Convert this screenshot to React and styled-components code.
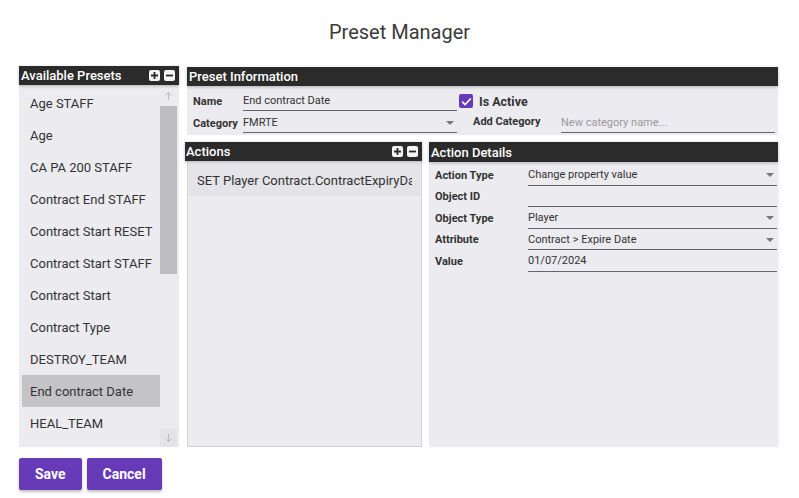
import React from "react";
import styled, { createGlobalStyle } from "styled-components";

const Global = createGlobalStyle`
  html, body { margin: 0; padding: 0; background: #fff; }
  body { font-family: Roboto, "Noto Sans", sans-serif; color: #333; }
  * { box-sizing: border-box; }
`;

const Page = styled.div`
  width: 799px;
  height: 498px;
  padding: 0 21px 0 19px;
  display: flex;
  flex-direction: column;
`;

const Title = styled.h1`
  margin: 0;
  height: 66px;
  display: flex;
  align-items: center;
  justify-content: center;
  font-size: 20px;
  font-weight: 400;
  color: #3a3a3a;
  padding: 0 0 2px 2px;
`;

const Main = styled.div`
  display: grid;
  grid-template-columns: 160px 1fr;
  column-gap: 8px;
  height: 381px;
`;

const Column = styled.div`
  display: flex;
  flex-direction: column;
  min-height: 0;
`;

const Header = styled.div`
  height: ${(p) => p.$h || 19}px;
  flex: none;
  background: #2b2b2b;
  color: #fff;
  font-size: 13px;
  font-weight: 500;
  display: flex;
  align-items: center;
  padding: 0 4px 0 ${(p) => p.$pl ?? 2}px;
  margin-left: ${(p) => p.$ml || 0}px;
  box-shadow: 0 1px 3px rgba(0, 0, 0, 0.25);
  position: relative;
  z-index: 1;
`;

const HeaderTitle = styled.span`
  flex: 1;
`;

const IconBtns = styled.div`
  display: flex;
  gap: 4px;
`;

const IconBtn = styled.div`
  width: 11px;
  height: 11px;
  border-radius: 2px;
  background: #f4f4f4;
  display: flex;
  align-items: center;
  justify-content: center;
`;

const ListBody = styled.div`
  flex: 1;
  background: #ecebf0;
  display: flex;
  padding: 2px 2px 0 3px;
  min-height: 0;
`;

const Items = styled.div`
  flex: 1;
  display: flex;
  flex-direction: column;
`;

const Item = styled.div`
  height: 32px;
  flex: none;
  display: flex;
  align-items: center;
  padding-left: 8px;
  font-size: 13px;
  color: #333;
  background: ${(p) => (p.$selected ? "#c4c3c8" : "transparent")};
`;

const ScrollBar = styled.div`
  width: 17px;
  display: flex;
  flex-direction: column;
  margin-top: -2px;
`;

const ScrollArrow = styled.div`
  height: ${(p) => p.$h || 18}px;
  display: flex;
  align-items: center;
  justify-content: center;
  background: ${(p) => (p.$bg ? "#e4e3e8" : "transparent")};
`;

const ScrollThumb = styled.div`
  height: 168px;
  background: #bdbcc1;
`;

const ScrollSpace = styled.div`
  flex: 1;
`;

const RightCol = styled.div`
  display: flex;
  flex-direction: column;
  gap: 7px;
  min-height: 0;
`;

const InfoSection = styled.div`
  display: flex;
  flex-direction: column;
  margin-top: 1px;
`;

const InfoBody = styled.div`
  background: #ecebf0;
  height: 49px;
  padding: 5px 2px 0 6px;
  display: grid;
  grid-template-columns: 50px 214px 16px 88px 214px;
  grid-template-rows: 20px 20px;
  row-gap: 2px;
  align-items: end;
`;

const Label = styled.div`
  font-size: 11px;
  font-weight: 700;
  color: #333;
  align-self: center;
  white-space: nowrap;
  margin-top: ${(p) => p.$mt || 0}px;
`;

const Field = styled.div`
  height: 20px;
  border-bottom: 1px solid #666;
  display: flex;
  align-items: center;
  padding: 0 3px 1px 0;
  font-size: 11px;
  color: ${(p) => (p.$placeholder ? "#9a9a9e" : "#333")};
  white-space: nowrap;
  overflow: hidden;
`;

const FieldText = styled.span`
  flex: 1;
  overflow: hidden;
`;

const Caret = styled.span`
  width: 0;
  height: 0;
  border-left: 4px solid transparent;
  border-right: 4px solid transparent;
  border-top: 4px solid #777;
  margin-top: 1px;
`;

const CheckGroup = styled.div`
  grid-column: 3 / span 2;
  display: flex;
  align-items: center;
  gap: 6px;
  margin-left: 2px;
  align-self: center;
  font-size: 12.5px;
  font-weight: 700;
  color: #333;
`;

const Check = styled.div`
  width: 14px;
  height: 14px;
  border-radius: 2px;
  background: #673ab7;
  display: flex;
  align-items: center;
  justify-content: center;
`;

const Lower = styled.div`
  flex: 1;
  display: grid;
  grid-template-columns: 235px 1fr;
  column-gap: 7px;
  min-height: 0;
`;

const ActionsBody = styled.div`
  flex: 1;
  background: #ecebf0;
  border: 1px solid #d2d1d6;
  border-top: none;
  padding: 3px 1px 0 1px;
`;

const ActionRow = styled.div`
  height: 32px;
  display: flex;
  align-items: center;
  padding: 0 8px 0 8px;
  font-size: 13px;
  color: #333;
  background: #e4e3e8;
  white-space: nowrap;
`;

const ActionText = styled.span`
  overflow: hidden;
  flex: 1;
`;

const DetailsBody = styled.div`
  flex: 1;
  background: #ecebf0;
  padding: 3px 1px 0 6px;
  display: flex;
  flex-direction: column;
  gap: 1px;
  box-shadow: 1px 0 2px rgba(0, 0, 0, 0.06);
`;

const DetailRow = styled.div`
  display: grid;
  grid-template-columns: 93px 1fr;
  height: 20.5px;
  align-items: end;
`;

const Footer = styled.div`
  display: flex;
  gap: 5px;
  margin-top: 11px;
`;

const Button = styled.button`
  height: 32px;
  padding: 0 ${(p) => p.$px || 16}px;
  border: none;
  border-radius: 2px;
  background: #673ab7;
  color: #fff;
  font-family: Roboto, sans-serif;
  font-size: 14px;
  font-weight: 700;
  box-shadow: 0 2px 3px rgba(0, 0, 0, 0.25);
  cursor: pointer;
`;

const Plus = () => (
  <svg width="9" height="9" viewBox="0 0 9 9">
    <path d="M4.5 1v7M1 4.5h7" stroke="#2b2b2b" strokeWidth="1.8" />
  </svg>
);
const Minus = () => (
  <svg width="9" height="9" viewBox="0 0 9 9">
    <path d="M1 4.5h7" stroke="#2b2b2b" strokeWidth="1.8" />
  </svg>
);

const Arrow = ({ down }) => (
  <svg width="9" height="10" viewBox="0 0 9 10" style={down ? { transform: "rotate(180deg)" } : undefined}>
    <path d="M4.5 9V1.5M1.5 4.5l3-3 3 3" stroke="#b9b8bd" strokeWidth="1" fill="none" />
  </svg>
);

const presets = [
  "Age STAFF",
  "Age",
  "CA PA 200 STAFF",
  "Contract End STAFF",
  "Contract Start RESET",
  "Contract Start STAFF",
  "Contract Start",
  "Contract Type",
  "DESTROY_TEAM",
  "End contract Date",
  "HEAL_TEAM",
];

const details = [
  { label: "Action Type", value: "Change property value", select: true },
  { label: "Object ID", value: "" },
  { label: "Object Type", value: "Player", select: true },
  { label: "Attribute", value: "Contract > Expire Date", select: true },
  { label: "Value", value: "01/07/2024" },
];

export default function App() {
  return (
    <>
      <Global />
      <Page>
        <Title>Preset Manager</Title>
        <Main>
          <Column>
            <Header $h={19}>
              <HeaderTitle>Available Presets</HeaderTitle>
              <IconBtns>
                <IconBtn><Plus /></IconBtn>
                <IconBtn><Minus /></IconBtn>
              </IconBtns>
            </Header>
            <ListBody>
              <Items>
                {presets.map((p) => (
                  <Item key={p} $selected={p === "End contract Date"}>{p}</Item>
                ))}
              </Items>
              <ScrollBar>
                <ScrollArrow $h={21}><Arrow /></ScrollArrow>
                <ScrollThumb />
                <ScrollSpace />
                <ScrollArrow $bg><Arrow down /></ScrollArrow>
              </ScrollBar>
            </ListBody>
          </Column>
          <RightCol>
            <InfoSection>
              <Header $h={19}>
                <HeaderTitle>Preset Information</HeaderTitle>
              </Header>
              <InfoBody>
                <Label>Name</Label>
                <Field><FieldText>End contract Date</FieldText></Field>
                <CheckGroup>
                  <Check>
                    <svg width="11" height="9" viewBox="0 0 11 9">
                      <path d="M1.2 4.6l2.9 2.9L9.8 1.5" stroke="#fff" strokeWidth="1.6" fill="none" />
                    </svg>
                  </Check>
                  Is Active
                </CheckGroup>
                <span />
                <Label>Category</Label>
                <Field><FieldText>FMRTE</FieldText><Caret /></Field>
                <span />
                <Label $mt={-3}>Add Category</Label>
                <Field $placeholder><FieldText>New category name...</FieldText></Field>
              </InfoBody>
            </InfoSection>
            <Lower>
              <Column>
                <Header $h={19} $pl={1} $ml={-2}>
                  <HeaderTitle>Actions</HeaderTitle>
                  <IconBtns>
                    <IconBtn><Plus /></IconBtn>
                    <IconBtn><Minus /></IconBtn>
                  </IconBtns>
                </Header>
                <ActionsBody>
                  <ActionRow>
                    <ActionText>SET Player Contract.ContractExpiryDate</ActionText>
                  </ActionRow>
                </ActionsBody>
              </Column>
              <Column>
                <Header $h={20}>
                  <HeaderTitle>Action Details</HeaderTitle>
                </Header>
                <DetailsBody>
                  {details.map((d) => (
                    <DetailRow key={d.label}>
                      <Label>{d.label}</Label>
                      <Field>
                        <FieldText>{d.value}</FieldText>
                        {d.select && <Caret />}
                      </Field>
                    </DetailRow>
                  ))}
                </DetailsBody>
              </Column>
            </Lower>
          </RightCol>
        </Main>
        <Footer>
          <Button $px={16}>Save</Button>
          <Button $px={16}>Cancel</Button>
        </Footer>
      </Page>
    </>
  );
}
